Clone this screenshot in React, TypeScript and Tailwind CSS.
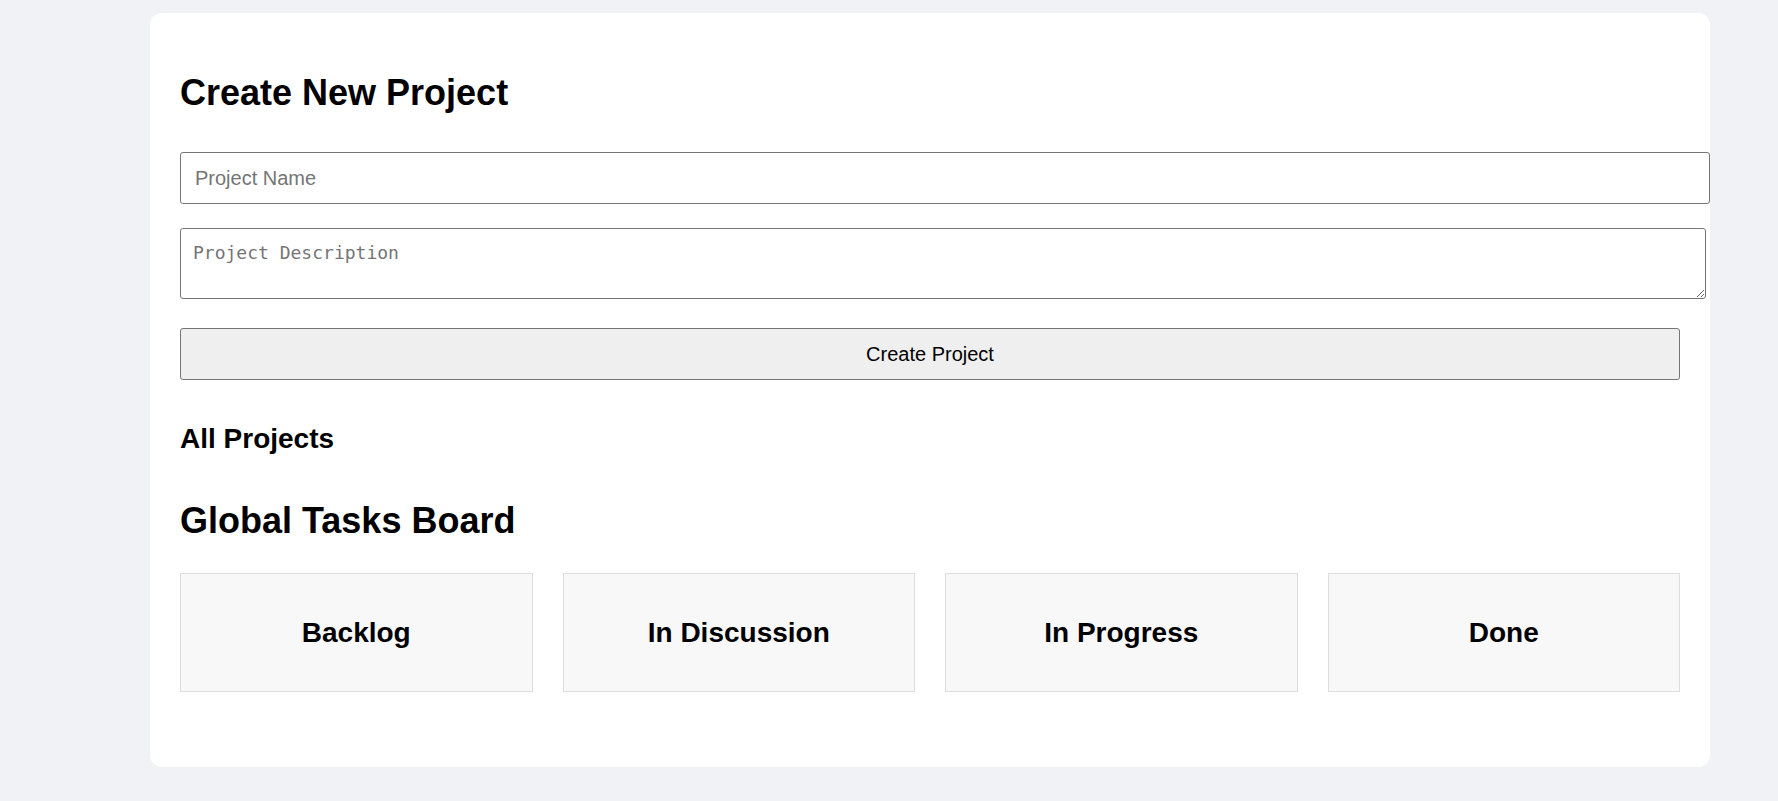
import React from "react";

const columns = ["Backlog", "In Discussion", "In Progress", "Done"];

export default function App() {
  return (
    <div className="min-h-[801px] bg-[#f0f2f5] pt-[13px] font-['Liberation_Sans',Arial,sans-serif] text-black">
      <div className="ml-[150px] w-[1560px] rounded-[12px] bg-white px-[30px] pt-[30px] pb-[75px]">
        <h1 className="mt-[29px] text-[36px] font-bold leading-[42px]">Create New Project</h1>

        <input
          type="text"
          placeholder="Project Name"
          className="mt-[38px] block h-[52px] w-[calc(100%+30px)] rounded-[3px] border border-[#767676] bg-white px-[14px] text-[20px] placeholder:text-[#757575] outline-none"
        />

        <textarea
          placeholder="Project Description"
          className="mt-[24px] block h-[71px] w-[calc(100%+26px)] rounded-[3px] border border-[#767676] bg-white px-[12px] pt-[10px] font-['DejaVu_Sans_Mono',monospace] text-[18px] placeholder:text-[#757575] outline-none"
        />

        <button
          type="button"
          className="mt-[29px] block h-[52px] w-full rounded-[3px] border border-[#767676] bg-[#efefef] text-[20px] text-black"
        >
          Create Project
        </button>

        <h2 className="mt-[43px] text-[28px] font-bold leading-[32px]">All Projects</h2>

        <h2 className="mt-[45px] text-[36px] font-bold leading-[42px]">Global Tasks Board</h2>

        <div className="mt-[31px] grid grid-cols-4 gap-[30px]">
          {columns.map((c) => (
            <div
              key={c}
              className="flex h-[119px] items-center justify-center border border-[#dddddd] bg-[#f8f8f8]"
            >
              <h3 className="text-[28px] font-bold leading-[32px]">{c}</h3>
            </div>
          ))}
        </div>
      </div>
    </div>
  );
}
